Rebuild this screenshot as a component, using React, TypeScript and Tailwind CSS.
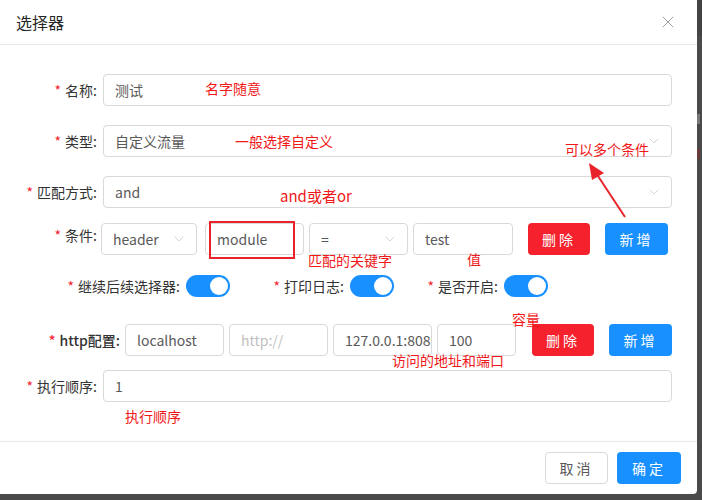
import React from 'react'
import { ChevronDown, X } from 'lucide-react'

const font = { fontFamily: '"Noto Sans CJK SC", "Noto Sans", sans-serif' }

function Label({ text, width, bold }: { text: string; width: string; bold?: boolean }) {
  return (
    <div className={`${width} flex justify-end items-center shrink-0 text-[14px] text-[#333] ${bold ? 'font-medium' : ''}`}>
      <span className="text-[#f5222d] mr-[4px]">*</span>
      <span>{text}</span>
    </div>
  )
}

function Input({ value, width, placeholder }: { value?: string; width: string; placeholder?: boolean }) {
  return (
    <div
      className={`${width} h-8 shrink-0 border border-[#d9d9d9] rounded-[4px] px-[11px] flex items-center overflow-hidden whitespace-nowrap text-[14px] ${placeholder ? 'text-[#bfbfbf]' : 'text-[#595959]'}`}
    >
      {value}
    </div>
  )
}

function Select({ value, width }: { value: string; width: string }) {
  return (
    <div className={`${width} h-8 shrink-0 border border-[#d9d9d9] rounded-[4px] pl-[11px] pr-[9px] flex items-center justify-between text-[14px] text-[#595959]`}>
      <span>{value}</span>
      <ChevronDown size={16} strokeWidth={1} className="text-[#bfbfbf]" />
    </div>
  )
}

function Toggle() {
  return (
    <div className="w-[44px] h-[22px] rounded-full bg-[#1890ff] flex items-center justify-end pr-[2px] shrink-0">
      <div className="w-[18px] h-[18px] rounded-full bg-white" />
    </div>
  )
}

function Btn({ text, color, width }: { text: string; color: 'red' | 'blue'; width: string }) {
  return (
    <button
      className={`${width} h-8 shrink-0 rounded-[4px] text-white text-[14px] tracking-[3px] ${color === 'red' ? 'bg-[#f5222d]' : 'bg-[#1890ff]'}`}
    >
      {text}
    </button>
  )
}

function Note({ text, className }: { text: string; className: string }) {
  return <span className={`absolute text-[14px] leading-5 text-[#f01818] whitespace-nowrap ${className}`}>{text}</span>
}

export default function App() {
  return (
    <div className="w-[702px] h-[500px] bg-[#4a4a4a] flex overflow-hidden" style={font}>
      <div className="relative w-[697px] h-[494px] bg-white rounded-br-[4px] flex flex-col shrink-0">
        {/* header */}
        <div className="h-[45px] border-b border-[#e8e8e8] flex items-center justify-between pl-[16px] pr-[19px] shrink-0">
          <span className="text-[16px] text-[#262626]">选择器</span>
          <X size={20} strokeWidth={1} className="text-[#8c8c8c]" />
        </div>

        {/* body */}
        <div className="h-[396px] flex flex-col shrink-0">
          <div className="flex items-center mt-[29px]">
            <Label text="名称:" width="w-[97px]" />
            <div className="ml-[6px]">
              <Input value="测试" width="w-[569px]" />
            </div>
          </div>

          <div className="flex items-center mt-[19px]">
            <Label text="类型:" width="w-[97px]" />
            <div className="ml-[6px]">
              <Select value="自定义流量" width="w-[569px]" />
            </div>
          </div>

          <div className="flex items-center mt-[19px]">
            <Label text="匹配方式:" width="w-[97px]" />
            <div className="ml-[6px]">
              <Select value="and" width="w-[569px]" />
            </div>
          </div>

          <div className="flex items-start mt-[15px]">
            <div className="h-6 flex">
              <Label text="条件:" width="w-[97px]" />
            </div>
            <div className="ml-[4px] flex">
              <Select value="header" width="w-[96px]" />
              <div className="ml-[8px]">
                <Input value="module" width="w-[99px]" />
              </div>
              <div className="ml-[5px]">
                <Select value="=" width="w-[99px]" />
              </div>
              <div className="ml-[5px]">
                <Input value="test" width="w-[100px]" />
              </div>
              <div className="ml-[15px]">
                <Btn text="删除" color="red" width="w-[62px]" />
              </div>
              <div className="ml-[15px]">
                <Btn text="新增" color="blue" width="w-[63px]" />
              </div>
            </div>
          </div>

          <div className="flex items-center mt-[20px] h-[22px]">
            <Label text="继续后续选择器:" width="w-[180px]" />
            <div className="ml-[6px]">
              <Toggle />
            </div>
            <Label text="打印日志:" width="w-[114px]" />
            <div className="ml-[6px]">
              <Toggle />
            </div>
            <Label text="是否开启:" width="w-[104px]" />
            <div className="ml-[6px]">
              <Toggle />
            </div>
          </div>

          <div className="flex items-center mt-[27px]">
            <Label text="http配置:" width="w-[120px]" bold />
            <div className="ml-[5px] flex">
              <Input value="localhost" width="w-[99px]" />
              <div className="ml-[5px]">
                <Input value="http://" width="w-[99px]" placeholder />
              </div>
              <div className="ml-[5px]">
                <Input value="127.0.0.1:8080" width="w-[99px]" />
              </div>
              <div className="ml-[5px]">
                <Input value="100" width="w-[79px]" />
              </div>
              <div className="ml-[16px]">
                <Btn text="删除" color="red" width="w-[62px]" />
              </div>
              <div className="ml-[15px]">
                <Btn text="新增" color="blue" width="w-[63px]" />
              </div>
            </div>
          </div>

          <div className="flex items-center mt-[14px]">
            <Label text="执行顺序:" width="w-[97px]" />
            <div className="ml-[6px]">
              <Input value="1" width="w-[569px]" />
            </div>
          </div>
        </div>

        {/* footer */}
        <div className="flex-1 border-t border-[#e8e8e8] flex justify-end items-start pt-[10px] pr-[16px] gap-[9px]">
          <button className="w-[63px] h-8 border border-[#d9d9d9] rounded-[4px] text-[14px] text-[#595959] tracking-[3px]">取消</button>
          <button className="w-[64px] h-8 rounded-[4px] bg-[#1890ff] text-white text-[14px] tracking-[3px]">确定</button>
        </div>

        {/* annotations drawn over the screenshot */}
        <Note text="名字随意" className="left-[205px] top-[78px]" />
        <Note text="一般选择自定义" className="left-[235px] top-[131px]" />
        <Note text="可以多个条件" className="left-[565px] top-[139px]" />
        <Note text="and或者or" className="left-[280px] top-[186px] text-[15px]" />
        <Note text="匹配的关键字" className="left-[308px] top-[250px]" />
        <Note text="值" className="left-[467px] top-[249px]" />
        <Note text="容量" className="left-[512px] top-[309px]" />
        <Note text="访问的地址和端口" className="left-[392px] top-[350px]" />
        <Note text="执行顺序" className="left-[125px] top-[406px]" />
        <div className="absolute left-[209px] top-[221px] w-[86px] h-[38px] border-2 border-[#e8232a]" />
        <svg className="absolute left-[580px] top-[160px]" width="60" height="65" viewBox="0 0 60 65">
          <line x1="45" y1="57" x2="14" y2="10" stroke="#e8232a" strokeWidth="2" />
          <polygon points="9,3 24,13 12,20" fill="#e8232a" />
        </svg>
      </div>

      {/* the page behind the dialog, barely visible at the edge */}
      <div className="flex-1 flex flex-col">
        <div className="h-[36px] bg-[#444]" />
        <div className="h-[78px]" />
        <div className="h-[10px] w-[3px] bg-[#777]" />
        <div className="h-[25px]" />
        <div className="h-[10px] w-[3px] bg-[#6a3a3a]" />
      </div>
    </div>
  )
}
